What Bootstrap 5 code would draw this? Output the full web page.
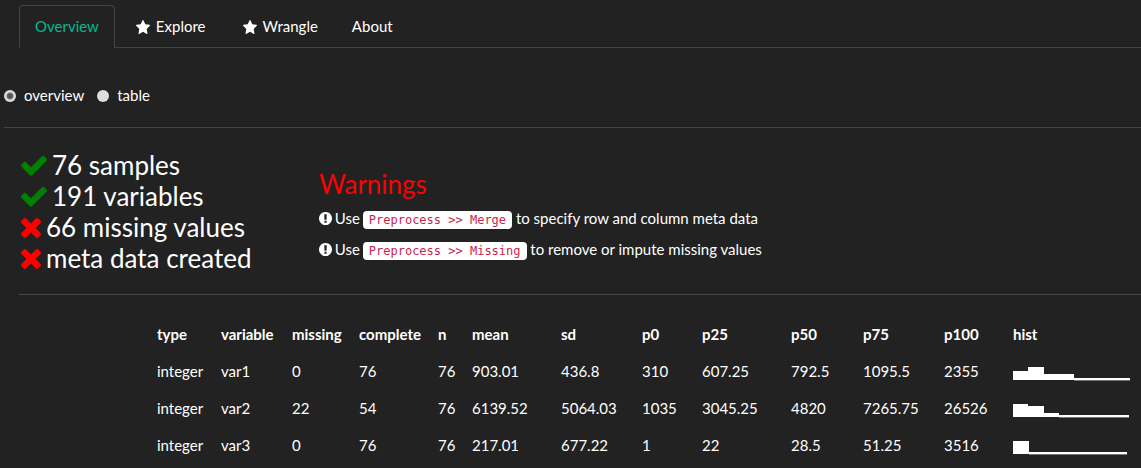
<!DOCTYPE html>
<html lang="en">
<head>
<meta charset="utf-8">
<meta name="viewport" content="width=device-width, initial-scale=1">
<title>Overview</title>
<link href="https://cdn.jsdelivr.net/npm/bootstrap@5.3.0/dist/css/bootstrap.min.css" rel="stylesheet">
<style>
  body { background: #222; color: #fff; font: 15px/21px Lato, sans-serif; overflow-x: hidden; }
  svg { fill: currentColor; }
  .rule { border-top: 1px solid #464545; opacity: 1; margin: 0; color: inherit; }
  .inset { margin-left: 19px; }
  .main-tabs { --bs-nav-tabs-border-color: #464545; --bs-nav-tabs-link-active-bg: #222; --bs-nav-tabs-link-active-color: #00bc8c; --bs-nav-tabs-link-active-border-color: #464545 #464545 #222; --bs-nav-link-color: #fff; --bs-nav-link-hover-color: #fff; --bs-nav-link-padding-x: 15px; --bs-nav-link-padding-y: 10px; --bs-nav-tabs-border-radius: 4px; gap: 2px; padding-top: 5px; }
  .main-tabs .nav-link { font-size: 15px; line-height: 21px; }
  .star { width: 14px; height: 14px; margin: 0 6px 3px 3px; }
  .views { padding: 37px 0 21px 4px; gap: 13px; }
  .views label { display: flex; align-items: center; gap: 8px; }
  .views input { appearance: none; width: 12px; height: 12px; margin: 0; border-radius: 50%; background: #ddd; }
  .views input:checked { background: radial-gradient(circle, #555 0 2px, #777 3px, #ddd 4px); }
  .summary { padding: 22px 0 20px; }
  .checks { width: 300px; font-size: 26px; line-height: 31px; }
  .checks svg { display: block; height: 20px; margin-left: 2px; margin-right: 5px; }
  .tick { width: 26px; color: green; }
  .cross { width: 20px; color: red; }
  .warnings { padding-top: 19px; }
  .warnings h2 { font-size: 26px; line-height: 31px; color: red; margin: 0 0 8px; font-weight: 400; }
  .warnings p { margin: 0 0 10px; }
  .warnings svg { width: 13px; height: 13px; margin: -3px -1px 0 0; }
  code { font: 12px/15px "DejaVu Sans Mono", monospace; color: #c7254e; background: #fff; border-radius: 4px; padding: 2px 6px; margin-left: -1px; }
  .stats { margin: 21px 0 0 149px; width: 990px; table-layout: fixed; }
  .stats th, .stats td { padding: 8px; text-align: left; white-space: nowrap; }
  .stats svg { display: block; width: 117px; height: 14px; margin-top: 4px; }
  .c-34 { width: 34px } .c-60 { width: 60px } .c-64 { width: 64px } .c-67 { width: 67px } .c-69 { width: 69px }
  .c-71 { width: 71px } .c-72 { width: 72px } .c-79 { width: 79px } .c-81 { width: 81px } .c-89 { width: 89px }
</style>
</head>
<body>
<svg class="d-none">
  <symbol id="star" viewBox="64 59 1664 1560" preserveAspectRatio="none"><path d="M1728 647q0 22-26 48l-363 354 86 500q1 7 1 20 0 21-10.5 35.5t-30.5 14.5q-19 0-40-12l-449-236-449 236q-22 12-40 12-21 0-31.5-14.5t-10.5-35.5q0-6 2-20l86-500-364-354q-25-27-25-48 0-37 56-46l502-73 225-455q19-41 49-41t49 41l225 455 502 73q56 9 56 46z"/></symbol>
  <symbol id="tick" viewBox="121 370 1550 1152"><path d="M1671 566q0 40-28 68l-724 724-136 136q-28 28-68 28t-68-28l-136-136-362-362q-28-28-28-68t28-68l136-136q28-28 68-28t68 28l294 295 656-657q28-28 68-28t68 28l136 136q28 28 28 68z"/></symbol>
  <symbol id="cross" viewBox="302 366 1188 1188"><path d="M1490 1322q0 40-28 68l-136 136q-28 28-68 28t-68-28l-294-294-294 294q-28 28-68 28t-68-28l-136-136q-28-28-28-68t28-68l294-294-294-294q-28-28-28-68t28-68l136-136q28-28 68-28t68 28l294 294 294-294q28-28 68-28t68 28l136 136q28 28 28 68t-28 68l-294 294 294 294q28 28 28 68z"/></symbol>
  <symbol id="alert" viewBox="128 128 1536 1536"><path d="M896 128q209 0 385.5 103t279.5 279.5 103 385.5-103 385.5-279.5 279.5-385.5 103-385.5-103-279.5-279.5-103-385.5 103-385.5 279.5-279.5 385.5-103zm128 1247v-190q0-14-9-23.5t-22-9.5h-192q-13 0-23 10t-10 23v190q0 13 10 23t23 10h192q13 0 22-9.5t9-23.5zm-2-344l18-621q0-12-10-18-10-8-24-8h-220q-14 0-24 8-10 6-10 18l17 621q0 10 10 17.5t24 7.5h185q14 0 23.5-7.5t10.5-17.5z"/></symbol>
</svg>

<ul class="nav nav-tabs main-tabs inset">
  <li class="nav-item"><a class="nav-link active" href="#overview">Overview</a></li>
  <li class="nav-item"><a class="nav-link" href="#explore"><svg class="star"><use href="#star"/></svg>Explore</a></li>
  <li class="nav-item"><a class="nav-link" href="#wrangle"><svg class="star"><use href="#star"/></svg>Wrangle</a></li>
  <li class="nav-item"><a class="nav-link" href="#about">About</a></li>
</ul>

<main>
  <form class="views d-flex">
    <label for="v-overview"><input type="radio" name="view" id="v-overview" checked>overview</label>
    <label for="v-table"><input type="radio" name="view" id="v-table">table</label>
  </form>
  <hr class="rule ms-1">

  <section class="summary inset d-flex">
    <ul class="checks list-unstyled mb-0">
      <li class="d-flex align-items-center"><svg class="tick"><use href="#tick"/></svg>76 samples</li>
      <li class="d-flex align-items-center"><svg class="tick"><use href="#tick"/></svg>191 variables</li>
      <li class="d-flex align-items-center"><svg class="cross"><use href="#cross"/></svg>66 missing values</li>
      <li class="d-flex align-items-center"><svg class="cross"><use href="#cross"/></svg>meta data created</li>
    </ul>
    <div class="warnings">
      <h2>Warnings</h2>
      <p><svg><use href="#alert"/></svg> Use <code>Preprocess &gt;&gt; Merge</code> to specify row and column meta data</p>
      <p class="mb-0"><svg><use href="#alert"/></svg> Use <code>Preprocess &gt;&gt; Missing</code> to remove or impute missing values</p>
    </div>
  </section>
  <hr class="rule inset">

  <table class="stats">
    <colgroup><col class="c-64"><col class="c-71"><col class="c-67"><col class="c-79"><col class="c-34"><col class="c-89"><col class="c-81"><col class="c-60"><col class="c-89"><col class="c-72"><col class="c-81"><col class="c-69"><col></colgroup>
    <thead>
      <tr><th>type</th><th>variable</th><th>missing</th><th>complete</th><th>n</th><th>mean</th><th>sd</th><th>p0</th><th>p25</th><th>p50</th><th>p75</th><th>p100</th><th>hist</th></tr>
    </thead>
    <tbody>
      <tr><td>integer</td><td>var1</td><td>0</td><td>76</td><td>76</td><td>903.01</td><td>436.8</td><td>310</td><td>607.25</td><td>792.5</td><td>1095.5</td><td>2355</td>
        <td><svg viewBox="0 0 117 14"><path d="M0 4h15V0h16v7h30v6H0z"/><path d="M61 11h56v2H61z"/><path fill="#777" d="M61 13h56v1H61z"/></svg></td></tr>
      <tr><td>integer</td><td>var2</td><td>22</td><td>54</td><td>76</td><td>6139.52</td><td>5064.03</td><td>1035</td><td>3045.25</td><td>4820</td><td>7265.75</td><td>26526</td>
        <td><svg viewBox="0 0 117 14"><path d="M0 0h15v2h16v7h15v4H0z"/><path d="M46 11h70v2H46z"/><path fill="#777" d="M46 13h70v1H46z"/></svg></td></tr>
      <tr><td>integer</td><td>var3</td><td>0</td><td>76</td><td>76</td><td>217.01</td><td>677.22</td><td>1</td><td>22</td><td>28.5</td><td>51.25</td><td>3516</td>
        <td><svg viewBox="0 0 117 14"><path d="M0 0h16v13H0z"/><path d="M16 11h98v2H16z"/><path fill="#777" d="M16 13h98v1H16z"/></svg></td></tr>
    </tbody>
  </table>
</main>
<script src="https://cdn.jsdelivr.net/npm/bootstrap@5.3.0/dist/js/bootstrap.bundle.min.js"></script>
</body>
</html>
